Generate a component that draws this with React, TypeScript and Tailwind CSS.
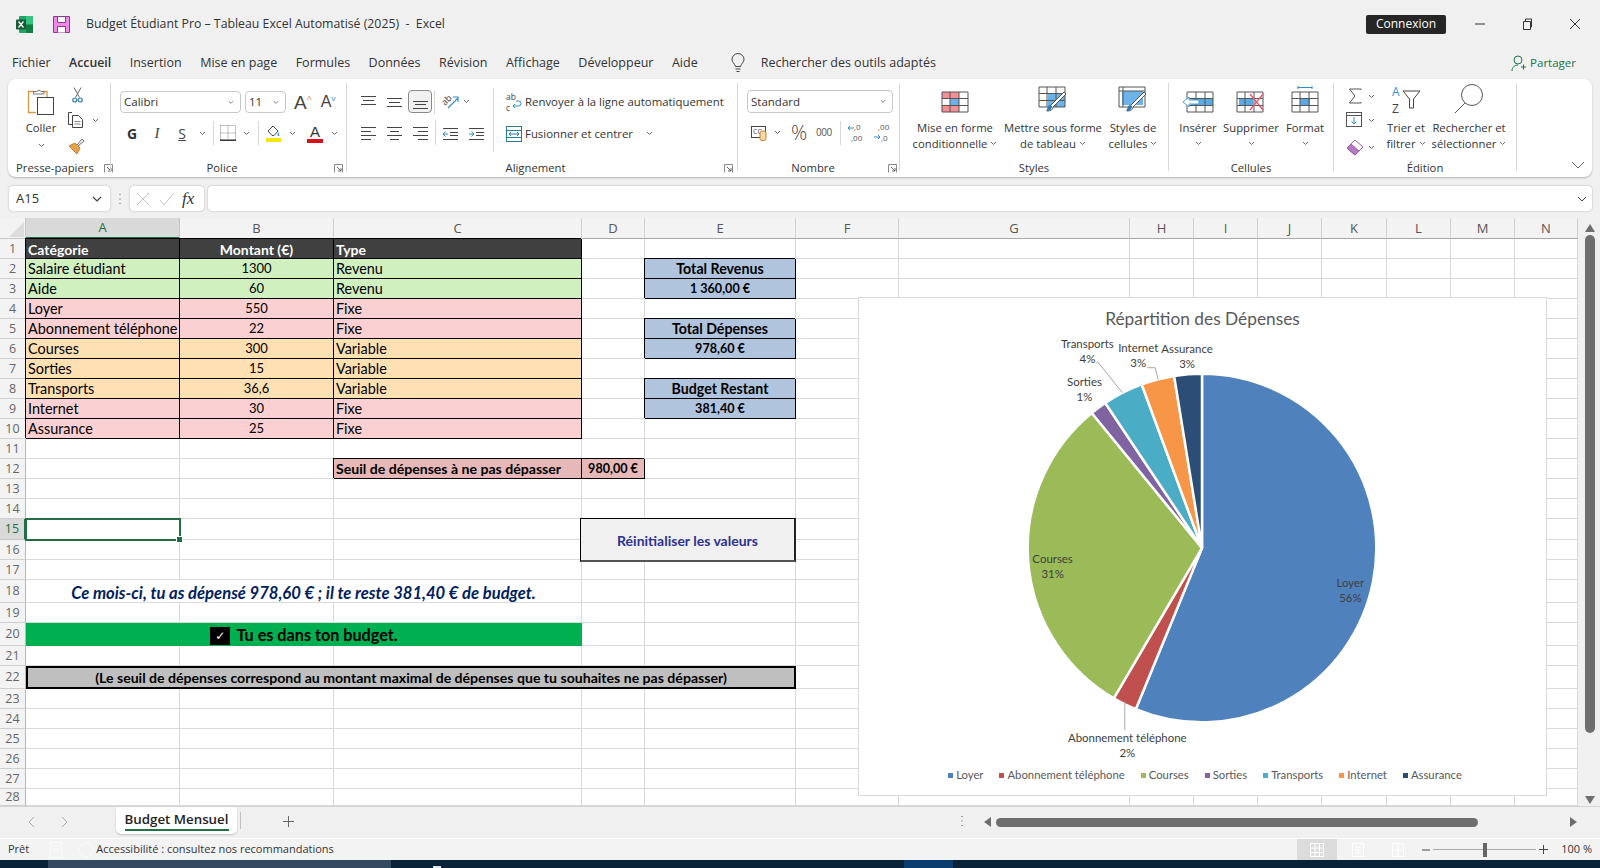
import React from "react";

const Chev = ({ s = 7 }: { s?: number }) => (
  <svg width={s} height={5} viewBox="0 0 7 5" className="shrink-0"><path d="M1 1l2.5 2.5L6 1" fill="none" stroke="#666" strokeWidth="1" /></svg>
);
const Launch = () => (
  <svg width="9" height="9" viewBox="0 0 9 9" className="shrink-0"><path d="M.5 8.5V.5h8v8" fill="none" stroke="#8a8a8a" /><path d="M3 3l4 4M7 4v3H4" fill="none" stroke="#666" /></svg>
);
const Sep = ({ cls }: { cls: string }) => <div className={`w-px bg-[#d6d6d6] shrink-0 ${cls}`} />;

function Group({ w, label, launch, pad, children }: { w: string; label: string; launch?: string; pad?: string; children: React.ReactNode }) {
  return (
    <>
      <div className={`flex flex-col h-full shrink-0 ${w}`}>
        <div className="flex-1 flex min-h-0">{children}</div>
        <div className={`h-[18px] flex items-center text-[11.300px] text-[#333] whitespace-nowrap ${pad ?? ""}`}>
          <span className="flex-1 text-center">{label}</span>
          {launch ? <span className={`flex ${launch}`}><Launch /></span> : null}
        </div>
      </div>
      <div className="w-px h-[88px] mt-[4px] bg-[#d8d8d8] shrink-0" />
    </>
  );
}

const Paste = () => (
  <svg width="28" height="29" viewBox="0 0 28 29">
    <path d="M7 4.500H1.500v21H9M15 4.500h5V10" fill="none" stroke="#d39a45" strokeWidth="1.300" />
    <path d="M6.500 7V4.500H10a2.500 2.500 0 0 1 4 0h3V7z" fill="#fff" stroke="#777" />
    <rect x="10.500" y="10.500" width="16" height="17" fill="#fff" stroke="#444" />
  </svg>
);
const Cut = () => (
  <svg width="11" height="16" viewBox="0 0 11 16">
    <path d="M2 .5l5.500 10M9 .5L3.500 10.500" stroke="#666" fill="none" />
    <circle cx="2.800" cy="13" r="2" fill="none" stroke="#2f79b5" strokeWidth="1.200" />
    <circle cx="8.200" cy="13" r="2" fill="none" stroke="#2f79b5" strokeWidth="1.200" />
  </svg>
);
const Copy = () => (
  <svg width="16" height="16" viewBox="0 0 16 16">
    <path d="M4 .5H.5v12H4" fill="none" stroke="#444" />
    <path d="M4.500 3.500h6l4 4v8h-10z" fill="#fff" stroke="#444" />
    <path d="M6.500 9.500h6M6.500 12h6" stroke="#888" />
  </svg>
);
const Brush = () => (
  <svg width="17" height="16" viewBox="0 0 17 16">
    <path d="M1 8l6-3 5 5-3 6z" fill="#e8a14f" stroke="#c97e2a" />
    <path d="M9 7l5-6 2 2-6 5" fill="#fff" stroke="#666" />
  </svg>
);
const Borders = () => (
  <svg width="16" height="16" viewBox="0 0 16 16">
    <path d="M.5 .5h15v15M.5 .5v15M8 .5v14M.5 8h15" fill="none" stroke="#888" strokeDasharray="1 1" />
    <path d="M0 15.200h16" stroke="#222" strokeWidth="1.400" />
  </svg>
);
const FillI = () => (
  <svg width="17" height="18" viewBox="0 0 17 18">
    <path d="M3 7l5-5 5 5-4 4.500H7z" fill="#fff" stroke="#444" />
    <path d="M13 8c1 2 2 3 1 4s-2-1-1-4z" fill="#3b8fd1" />
    <rect x="1" y="14" width="15" height="4" fill="#f5e612" />
  </svg>
);
const Line = ({ ys, xs }: { ys: number[]; xs: [number, number][] }) => (
  <svg width="15" height="16" viewBox="0 0 15 16">
    {ys.map((y, i) => <path key={i} d={`M${xs[i][0]} ${y}H${xs[i][1]}`} stroke="#444" />)}
  </svg>
);
const Orient = () => (
  <svg width="17" height="17" viewBox="0 0 17 17" className="overflow-visible">
    <text x="0" y="10" fontSize="9" fill="#444" transform="rotate(-45 5 8)">ab</text>
    <path d="M6 15L16 5M11 4h5v5" fill="none" stroke="#2f8fc4" strokeWidth="1.100" />
  </svg>
);
const IndentL = () => (
  <svg width="15" height="16" viewBox="0 0 15 16">
    <path d="M0 3.500h15M7 7.500h8M7 10.500h8M0 14.500h15" stroke="#444" fill="none" /><path d="M5 9H0M2.500 6.500L0 9l2.500 2.500" stroke="#2f8fc4" fill="none" />
  </svg>
);
const IndentR = () => (
  <svg width="15" height="16" viewBox="0 0 15 16">
    <path d="M0 3.500h15M7 7.500h8M7 10.500h8M0 14.500h15" stroke="#444" fill="none" /><path d="M0 9h5M2.500 6.500L5 9l-2.500 2.500" stroke="#2f8fc4" fill="none" />
  </svg>
);
const Wrap = () => (
  <svg width="16" height="18" viewBox="0 0 16 18" className="overflow-visible">
    <text x="0" y="7" fontSize="8.500" fill="#444">ab</text>
    <text x="0" y="18" fontSize="8.500" fill="#444">c</text>
    <path d="M7 13h5.500a2.500 2.500 0 0 0 0-5H10M7 13l2-2M7 13l2 2" fill="none" stroke="#2f8fc4" />
  </svg>
);
const Merge = () => (
  <svg width="16" height="16" viewBox="0 0 16 16">
    <rect x=".5" y=".5" width="15" height="15" fill="#fff" stroke="#2a7a9c" />
    <path d="M.5 4.500h15M.5 11.500h15" stroke="#2a7a9c" />
    <path d="M3 8h10M5 6L3 8l2 2M11 6l2 2-2 2" fill="none" stroke="#2a7a9c" />
  </svg>
);
const NumFmt = () => (
  <svg width="17" height="16" viewBox="0 0 17 16" className="overflow-visible">
    <rect x=".5" y="1.500" width="14" height="11" fill="#fff" stroke="#444" />
    <text x="2" y="9" fontSize="7" fill="#444">CC</text>
    <rect x="9" y="6" width="6" height="9.500" rx="2" fill="#f3d9a8" stroke="#c97e2a" />
  </svg>
);
const Dec = ({ inc }: { inc: boolean }) => (
  <svg width="17" height="19" viewBox="0 0 17 19" className="overflow-visible">
    <text x={inc ? 7 : 5} y="7" fontSize="8" fill="#555">{inc ? ",0" : ",00"}</text>
    <text x={inc ? 4 : 8} y="18" fontSize="8" fill="#555">{inc ? ",00" : ",0"}</text>
    {inc ? <path d="M7 5H1M3 3L1 5l2 2" fill="none" stroke="#2f8fc4" /> : <path d="M1 14h6M5 12l2 2-2 2" fill="none" stroke="#2f8fc4" />}
  </svg>
);
const GridLines = () => (
  <path d="M1 1h26v20H1zM1 7.500h26M1 14.500h26M9 1v20M18 1v20" fill="none" stroke="#555" />
);
const Cond = () => (
  <svg width="28" height="22" viewBox="0 0 28 22">
    <rect x="1" y="1" width="17" height="6.500" fill="#f58f95" />
    <rect x="1" y="14.500" width="17" height="6.500" fill="#f58f95" />
    <rect x="9" y="7.500" width="9" height="7" fill="#6db3e8" />
    <GridLines />
  </svg>
);
const TableS = () => (
  <svg width="31" height="27" viewBox="0 0 31 27">
    <rect x="10" y="7.500" width="17" height="13.500" fill="#6db3e8" />
    <GridLines />
    <path d="M28 8L15 21c0 3-3 4-6 4 2-2 1-5 4-6L26 6z" fill="#fff" stroke="#555" />
    <path d="M14 20c0 3-2 5-6 5 2-2 1-5 4-6z" fill="#2f79b5" />
  </svg>
);
const CellS = () => (
  <svg width="31" height="27" viewBox="0 0 31 27">
    <rect x="4" y="5" width="21" height="14" fill="#6db3e8" />
    <path d="M1 1h26v20H1zM1 5h26M5 1v20" fill="none" stroke="#555" />
    <path d="M28 8L15 21c0 3-3 4-6 4 2-2 1-5 4-6L26 6z" fill="#fff" stroke="#555" />
    <path d="M14 20c0 3-2 5-6 5 2-2 1-5 4-6z" fill="#2f79b5" />
  </svg>
);
const Insert = () => (
  <svg width="32" height="22" viewBox="0 0 32 22">
    <rect x="9" y="7.500" width="22" height="7" fill="#5aa9e0" />
    <path d="M5 1h26v20H5zM5 7.500h26M5 14.500h26M14 1v20M23 1v20" fill="none" stroke="#555" />
    <path d="M1 11l6-5v3h10v4H7v3z" fill="#fff" stroke="#4aa0d8" />
  </svg>
);
const Delete = () => (
  <svg width="30" height="22" viewBox="0 0 30 22">
    <rect x="3" y="7.500" width="14" height="7" fill="#5aa9e0" />
    <path d="M1 1h26v20H1zM1 7.500h26M1 14.500h26M9 1v20M18 1v20" fill="none" stroke="#555" />
    <path d="M14 3l13 16M27 3L14 19" stroke="#e8596a" strokeWidth="1.300" />
  </svg>
);
const FormatI = () => (
  <svg width="28" height="27" viewBox="0 0 28 27">
    <path d="M7 1.500h14M7 0v3M21 0v3" stroke="#2f8fc4" fill="none" />
    <g transform="translate(0 5)">
      <rect x="9" y="7.500" width="10" height="7" fill="#5aa9e0" />
      <GridLines />
    </g>
  </svg>
);
const Sigma = () => (
  <svg width="14" height="16" viewBox="0 0 14 16"><path d="M13 2V1H1.500l5.500 7-5.500 7H13v-1" fill="none" stroke="#555" /></svg>
);
const FillDown = () => (
  <svg width="17" height="16" viewBox="0 0 17 16">
    <rect x=".5" y=".5" width="15" height="14" fill="#fff" stroke="#555" />
    <path d="M.5 3.500h15" stroke="#555" />
    <path d="M8 5v7M5.500 9.500L8 12l2.500-2.500" fill="none" stroke="#2f8fc4" />
  </svg>
);
const Eraser = () => (
  <svg width="19" height="17" viewBox="0 0 19 17">
    <path d="M1 9l8-8 8 7-8 8z" fill="#fff" stroke="#9b59a8" />
    <path d="M1 9l4-4 8 7-4 4z" fill="#b779c2" stroke="#9b59a8" />
  </svg>
);
const Sort = () => (
  <svg width="29" height="27" viewBox="0 0 29 27" className="overflow-visible">
    <text x="0" y="10" fontSize="12" fill="#3b8fd1">A</text>
    <text x="0" y="27" fontSize="12" fill="#444">Z</text>
    <path d="M11 5h17l-6.500 8v9h-4v-9z" fill="#fff" stroke="#444" />
  </svg>
);
const Find = () => (
  <svg width="30" height="30" viewBox="0 0 30 30">
    <circle cx="18" cy="12" r="10.500" fill="#fff" stroke="#555" />
    <path d="M11 20L1 30" stroke="#555" />
  </svg>
);

function BigBtn({ w, icon, l1, l2 }: { w: string; icon: React.ReactNode; l1: string; l2?: string }) {
  return (
    <div className={`flex flex-col items-center shrink-0 pt-[7px] ${w}`}>
      <div className="h-[27px] flex items-end">{icon}</div>
      <div className="mt-[7px] text-[11.300px] leading-[15px] text-center whitespace-nowrap text-[#333]">{l1}</div>
      <div className="text-[11.300px] leading-[15px] h-[16px] flex items-center justify-center gap-[3px] whitespace-nowrap text-[#333]">
        {l2 ? <span>{l2}</span> : null}
        <Chev />
      </div>
    </div>
  );
}

const Ribbon = () => (
  <div className="mx-2 h-[98px] rounded-lg bg-white shadow-[0_1px_2px_rgba(0,0,0,0.25)] flex text-[#333]">
    <Group w="w-[102px]" label="Presse-papiers" launch="pl-[10px] pr-[3px]" pad="pl-[8px]">
      <div className="w-[50px] ml-[8px] pt-[8px] flex flex-col items-center shrink-0">
        <Paste />
        <div className="mt-[4px] text-[11.300px] leading-[16px]">Coller</div>
        <div className="mt-[7px]"><Chev /></div>
      </div>
      <div className="ml-[2px] pt-[8px] flex flex-col shrink-0">
        <div className="h-[16px] pl-[4px]"><Cut /></div>
        <div className="mt-[9px] h-[16px] flex items-center"><Copy /><span className="ml-[8px]"><Chev /></span></div>
        <div className="mt-[10px] h-[16px]"><Brush /></div>
      </div>
    </Group>
    <Group w="w-[235px]" label="Police" launch="pr-[3px] pl-[1px]">
      <div className="pl-[9px] pt-[12px] shrink-0">
        <div className="flex items-center h-[22px]">
          <div className="w-[121px] h-[22px] border border-[#c8c8c8] rounded-[4px] flex items-center justify-between pl-[3px] pr-[6px] text-[11.500px]"><span>Calibri</span><Chev s={6} /></div>
          <div className="ml-[4px] w-[41px] h-[22px] border border-[#c8c8c8] rounded-[4px] flex items-center justify-between pl-[3px] pr-[6px] text-[11.500px]"><span>11</span><Chev s={6} /></div>
          <span className="ml-[8px] text-[19px] leading-none text-[#444] font-['Liberation_Sans',sans-serif]">A</span>
          <span className="text-[9px] leading-none self-start mt-[3px] text-[#c97e2a]">^</span>
          <span className="ml-[9px] text-[16px] leading-none text-[#444] font-['Liberation_Sans',sans-serif]">A</span>
          <span className="text-[8px] leading-none self-start mt-[3px] text-[#2f8fc4]">v</span>
        </div>
        <div className="mt-[9px] h-[22px] flex items-center">
          <div className="w-[24px] text-center text-[14px] font-bold text-[#333]">G</div>
          <div className="w-[26px] text-center text-[15px] italic font-['Liberation_Serif',serif] text-[#444]">I</div>
          <div className="w-[24px] text-center text-[14px] underline text-[#444]">S</div>
          <div className="w-[16px] flex justify-center"><Chev /></div>
          <Sep cls="ml-[3px] h-[24px]" />
          <div className="ml-[6px]"><Borders /></div>
          <div className="w-[20px] flex justify-center"><Chev /></div>
          <Sep cls="ml-[2px] h-[24px]" />
          <div className="ml-[6px]"><FillI /></div>
          <div className="w-[20px] flex justify-center"><Chev /></div>
          <div className="ml-[5px] w-[16px] flex flex-col items-center">
            <span className="text-[15px] leading-[15px] font-['Liberation_Sans',sans-serif] text-[#333]">A</span>
            <span className="w-[16px] h-[4px] bg-[#d8101c]" />
          </div>
          <div className="w-[22px] flex justify-center"><Chev /></div>
        </div>
      </div>
    </Group>
    <Group w="w-[390px]" label="Alignement" launch="pr-[4px]" pad="pr-[0px]">
      <div className="pl-[14px] pt-[11px] w-[146px] shrink-0">
        <div className="flex items-center h-[23px]">
          <Line ys={[2.5, 6.5, 10.5]} xs={[[0, 15], [2, 13], [0, 15]]} />
          <div className="ml-[11px]"><Line ys={[4.5, 8.5, 12.5]} xs={[[0, 15], [2, 13], [0, 15]]} /></div>
          <div className="ml-[6px] w-[24px] h-[23px] border border-[#8a8a8a] rounded-[4px] bg-[#f1f1f1] flex items-center justify-center"><Line ys={[7.5, 10.5, 14.5]} xs={[[0, 15], [2, 13], [0, 15]]} /></div>
          <Sep cls="ml-[2px] h-[24px]" />
          <div className="ml-[7px]"><Orient /></div>
          <div className="ml-[4px]"><Chev /></div>
        </div>
        <div className="mt-[8px] flex items-center h-[23px]">
          <Line ys={[2.5, 6.5, 10.5, 14.5]} xs={[[0, 15], [0, 10], [0, 15], [0, 10]]} />
          <div className="ml-[11px]"><Line ys={[2.5, 6.5, 10.5, 14.5]} xs={[[0, 15], [3, 12], [0, 15], [3, 12]]} /></div>
          <div className="ml-[11px]"><Line ys={[2.5, 6.5, 10.5, 14.5]} xs={[[0, 15], [5, 15], [0, 15], [5, 15]]} /></div>
          <Sep cls="ml-[7px] h-[24px]" />
          <div className="ml-[7px]"><IndentL /></div>
          <div className="ml-[11px]"><IndentR /></div>
        </div>
      </div>
      <Sep cls="mt-[9px] h-[64px]" />
      <div className="pl-[12px] pt-[11px]">
        <div className="flex items-center h-[23px] text-[11.400px]"><Wrap /><span className="ml-[3px] whitespace-nowrap">Renvoyer à la ligne automatiquement</span></div>
        <div className="mt-[9px] flex items-center h-[23px] text-[11.400px]"><Merge /><span className="ml-[3px] whitespace-nowrap">Fusionner et centrer</span><span className="ml-[13px]"><Chev /></span></div>
      </div>
    </Group>
    <Group w="w-[161px]" label="Nombre" launch="pr-[2px]">
      <div className="pl-[9px] pt-[11px]">
        <div className="w-[146px] h-[23px] border border-[#c8c8c8] rounded-[4px] flex items-center justify-between pl-[3px] pr-[6px] text-[11.500px]"><span>Standard</span><Chev s={6} /></div>
        <div className="mt-[8px] h-[23px] flex items-center pl-[4px]">
          <NumFmt />
          <div className="w-[18px] flex justify-center"><Chev /></div>
          <span className="ml-[5px] w-[18px] text-[20px] leading-none font-light text-[#444]">%</span>
          <span className="ml-[7px] w-[18px] text-[10px] text-[#555] tracking-[-0.5px]">000</span>
          <Sep cls="ml-[6px] h-[24px]" />
          <div className="ml-[6px]"><Dec inc /></div>
          <div className="ml-[9px]"><Dec inc={false} /></div>
        </div>
      </div>
    </Group>
    <Group w="w-[268px]" label="Styles">
      <div className="w-[5px] shrink-0" />
      <BigBtn w="w-[100px]" icon={<Cond />} l1="Mise en forme" l2="conditionnelle" />
      <BigBtn w="w-[96px]" icon={<TableS />} l1="Mettre sous forme" l2="de tableau" />
      <BigBtn w="w-[64px]" icon={<CellS />} l1="Styles de" l2="cellules" />
    </Group>
    <Group w="w-[164px]" label="Cellules">
      <div className="w-[1px] shrink-0" />
      <BigBtn w="w-[56px]" icon={<Insert />} l1="Insérer" />
      <BigBtn w="w-[50px]" icon={<Delete />} l1="Supprimer" />
      <BigBtn w="w-[58px]" icon={<FormatI />} l1="Format" />
    </Group>
    <Group w="w-[182px]" label="Édition">
      <div className="pl-[12px] pt-[8px] w-[42px] shrink-0 flex flex-col">
        <div className="h-[18px] flex items-center"><span className="ml-[2px]"><Sigma /></span><span className="ml-[6px]"><Chev /></span></div>
        <div className="mt-[6px] h-[18px] flex items-center"><FillDown /><span className="ml-[5px]"><Chev /></span></div>
        <div className="mt-[9px] h-[18px] flex items-center"><Eraser /><span className="ml-[3px]"><Chev /></span></div>
      </div>
      <BigBtn w="w-[60px]" icon={<Sort />} l1="Trier et" l2="filtrer" />
      <BigBtn w="w-[66px]" icon={<Find />} l1="Rechercher et" l2="sélectionner" />
    </Group>
    <div className="flex-1 flex items-end justify-end pr-[7px] pb-[8px]">
      <svg width="14" height="8" viewBox="0 0 14 8"><path d="M1 1l6 6 6-6" fill="none" stroke="#666" /></svg>
    </div>
  </div>
);

type Cell = { t?: React.ReactNode; c?: string; span?: 1 | 2 | 3 | 5 };
const gl = "border-r border-b border-[#dadada]";
const blk = "relative z-10 border-r border-b border-black shadow-[-1px_-1px_0_0_#000] flex items-center px-[2px] pt-[1px] whitespace-nowrap text-black";
const hd = `${blk} bg-[#404040] text-white font-bold text-[14px]`;
const gr = `${blk} bg-[#d0f0c0]`;
const pk = `${blk} bg-[#fad0d2]`;
const or = `${blk} bg-[#fee0b3]`;
const bl = `${blk} bg-[#b0c4de] font-bold justify-center text-[14.200px]`;
const blN = `${blk} bg-[#b0c4de] font-bold justify-center text-[12.600px]`;
const num = " justify-center text-[13px]";
const empty: Cell = {};
const dataRow = (cl: string, a: string, b: string, c: string): Cell[] => [
  { t: a, c: cl },
  { t: b, c: cl + num },
  { t: c, c: cl },
];
const rows: Cell[][] = [
  [{ t: "Catégorie", c: hd }, { t: "Montant (€)", c: hd + " justify-center" }, { t: "Type", c: hd }],
  [...dataRow(gr, "Salaire étudiant", "1300", "Revenu"), empty, { t: "Total Revenus", c: bl }],
  [...dataRow(gr, "Aide", "60", "Revenu"), empty, { t: "1 360,00 €", c: blN }],
  dataRow(pk, "Loyer", "550", "Fixe"),
  [...dataRow(pk, "Abonnement téléphone", "22", "Fixe"), empty, { t: "Total Dépenses", c: bl }],
  [...dataRow(or, "Courses", "300", "Variable"), empty, { t: "978,60 €", c: blN }],
  dataRow(or, "Sorties", "15", "Variable"),
  [...dataRow(or, "Transports", "36,6", "Variable"), empty, { t: "Budget Restant", c: bl }],
  [...dataRow(pk, "Internet", "30", "Fixe"), empty, { t: "381,40 €", c: blN }],
  dataRow(pk, "Assurance", "25", "Fixe"),
  [],
  [empty, empty, { t: "Seuil de dépenses à ne pas dépasser", c: `${blk} bg-[#e6b8b7] font-bold text-[14.100px]` }, { t: "980,00 €", c: `${blk} bg-[#e6b8b7] font-bold justify-center text-[12.600px]` }],
  [],
  [],
  [{ c: `${gl} relative z-20 outline-2 outline-[#1f6e46] -outline-offset-1` }],
  [],
  [],
  [{ span: 3, t: "Ce mois-ci, tu as dépensé 978,60 € ; il te reste 381,40 € de budget.", c: `${gl} flex items-center justify-center pt-[4px] font-bold italic text-[#002060] text-[16.600px]` }],
  [],
  [{ span: 3, t: (<><span className="w-[20px] h-[18px] bg-black text-white flex items-center justify-center text-[12px] mr-[6px] font-['DejaVu_Sans',sans-serif] font-normal">✓</span><span>Tu es dans ton budget.</span></>), c: "bg-[#00b050] flex items-center justify-center pt-[2px] font-bold text-[16.200px] text-black" }],
  [],
  [{ span: 5, t: "(Le seuil de dépenses correspond au montant maximal de dépenses que tu souhaites ne pas dépasser)", c: "relative z-10 bg-[#bfbfbf] border-2 border-black flex items-center justify-center font-bold text-[14.100px] text-black whitespace-nowrap" }],
  [], [], [], [], [], [],
];
const cols = ["A", "B", "C", "D", "E", "F", "G", "H", "I", "J", "K", "L", "M", "N"];
const spanCls: Record<number, string> = { 1: "", 2: "col-span-2", 3: "col-span-3", 5: "col-span-5" };

function Sheet() {
  return (
    <div className="relative grid grid-cols-[26px_154px_154px_248px_63px_151px_103px_231px_64px_64px_64px_65px_64px_64px_63px] grid-rows-[21px_repeat(14,20px)_21px_20px_20px_23px_20px_23px_20px_23px_repeat(5,20px)_17px] h-[588px] w-[1578px] shrink-0 overflow-hidden bg-white font-['Lato',sans-serif] text-[14.400px] text-black">
      <div className="bg-[#f3f3f3] border-r border-b border-[#c6c6c6] flex items-end justify-end">
        <svg width="20" height="18" viewBox="0 0 20 18"><path d="M19 2v15H4z" fill="#dcdcdc" /></svg>
      </div>
      {cols.map((c) => (
        <div key={c} className={c === "A"
          ? "bg-[#d9d9d9] border-b-2 border-b-[#1f6e46] border-r border-r-[#c6c6c6] flex items-center justify-center pt-[1px] text-[13px] text-[#1f6e46] font-['Open_Sans',sans-serif]"
          : "bg-[#f3f3f3] border-b border-b-[#a8a8a8] border-r border-r-[#d0d0d0] flex items-center justify-center pt-[1px] text-[13px] text-[#555] font-['Open_Sans',sans-serif]"}>{c}</div>
      ))}
      {rows.map((r, i) => {
        const used = r.reduce((n, c) => n + (c.span ?? 1), 0);
        const fill: Cell[] = Array.from({ length: 14 - used }, () => ({}));
        return (
          <React.Fragment key={i}>
            <div className={i === 14
              ? "bg-[#d9d9d9] border-r-2 border-r-[#1f6e46] border-b border-b-[#c6c6c6] flex items-center justify-center pt-[1px] text-[12.500px] text-[#1f6e46] font-['Open_Sans',sans-serif]"
              : "bg-[#f3f3f3] border-r border-r-[#b8b8b8] border-b border-b-[#d0d0d0] flex items-center justify-center pt-[1px] text-[12.500px] text-[#666] font-['Open_Sans',sans-serif]"}>{i + 1}</div>
            {[...r, ...fill].map((c, j) => (
              <div key={j} className={`${spanCls[c.span ?? 1]} ${c.c ?? gl}`}>
                {c.t}
                {i === 14 && j === 0 ? <span className="absolute right-[-4px] bottom-[-4px] w-[7px] h-[7px] bg-[#1f6e46] border border-white" /> : null}
              </div>
            ))}
          </React.Fragment>
        );
      })}
      <div className="absolute left-[580px] top-[300px] w-[216px] h-[44px] z-20 bg-[#f0f0f0] border-t border-l border-t-black border-l-black border-r-2 border-b-2 border-r-[#222] border-b-[#555] flex items-center justify-center pt-[1px] font-bold text-[14px] text-[#2e3192]">Réinitialiser les valeurs</div>
      <Chart />
    </div>
  );
}

const slices = [
  { n: "Loyer", v: 550, col: "#4f81bd" },
  { n: "Abonnement téléphone", v: 22, col: "#c0504d" },
  { n: "Courses", v: 300, col: "#9bbb59" },
  { n: "Sorties", v: 15, col: "#8064a2" },
  { n: "Transports", v: 36.6, col: "#4bacc6" },
  { n: "Internet", v: 30, col: "#f79646" },
  { n: "Assurance", v: 25, col: "#2c4d75" },
];
function pie() {
  const total = slices.reduce((s, x) => s + x.v, 0);
  const cx = 1202, cy = 548, r = 175;
  let a = 0;
  return slices.map((s) => {
    const b = a + (s.v / total) * Math.PI * 2;
    const p = (t: number) => `${(cx + r * Math.sin(t)).toFixed(2)} ${(cy - r * Math.cos(t)).toFixed(2)}`;
    const d = `M${cx} ${cy}L${p(a)}A${r} ${r} 0 ${b - a > Math.PI ? 1 : 0} 1 ${p(b)}Z`;
    a = b;
    return <path key={s.n} d={d} fill={s.col} stroke="#fff" strokeWidth="2.500" />;
  });
}
const lbl = (x: number, y: number, a: string, b: string) => (
  <text textAnchor="middle" fontSize="11.500" fill="#404040" key={a}>
    <tspan x={x} y={y}>{a}</tspan>
    <tspan x={x} y={y + 15}>{b}</tspan>
  </text>
);
function Chart() {
  return (
    <div className="absolute left-[858px] top-[79px] w-[689px] h-[499px] z-20 bg-white border border-[#d9d9d9] flex flex-col items-center">
      <svg viewBox="858 297 689 499" className="absolute inset-0 w-full h-full font-['Lato',sans-serif]">
        {pie()}
        <path d="M1096 362h2l24 30M1147 367h8l3 12M1124.500 702v29" fill="none" stroke="#a6a6a6" />
        {lbl(1087, 347, "Transports", "4%")}
        {lbl(1138, 351, "Internet", "3%")}
        {lbl(1187, 352, "Assurance", "3%")}
        {lbl(1084, 385, "Sorties", "1%")}
        {lbl(1052, 563, "Courses", "31%")}
        {lbl(1351, 587, "Loyer", "56%")}
        {lbl(1127, 743, "Abonnement téléphone", "2%")}
      </svg>
      <div className="relative mt-[8px] text-[17.300px] leading-[26px] text-[#595959]">Répartition des Dépenses</div>
      <div className="relative mt-auto mb-[12px] ml-[5px] flex gap-[16px] text-[11.300px] leading-[16px] text-[#595959]">
        {slices.map((s) => (
          <span key={s.n} className="flex items-center gap-[3px]">
            <svg width="5" height="5" viewBox="0 0 5 5"><rect width="5" height="5" fill={s.col} /></svg>
            {s.n}
          </span>
        ))}
      </div>
    </div>
  );
}

export default function App() {
  return (
    <div className="w-[1600px] h-[868px] overflow-hidden bg-[#f0f0f0] flex flex-col font-['Open_Sans',sans-serif] text-[#333]">
      <div className="h-[44px] pt-[4px] flex items-center shrink-0">
        <svg className="ml-[16px]" width="17" height="17" viewBox="0 0 17 17">
          <rect x="3" y="0" width="14" height="17" rx="1" fill="#21a366" />
          <rect x="10" y="0" width="7" height="8.500" fill="#33c481" />
          <rect x="10" y="8.500" width="7" height="8.500" fill="#107c41" />
          <rect x="0" y="3.500" width="10" height="10" rx="1" fill="#185c37" />
          <path d="M2.500 5.500l5 6M7.500 5.500l-5 6" stroke="#fff" strokeWidth="1.300" />
        </svg>
        <svg className="ml-[20px]" width="17" height="17" viewBox="0 0 17 17">
          <path d="M.5 .5h16v16H.5z" fill="#f08ae8" stroke="#8a3a8e" />
          <path d="M4.500 .5h8v6h-8zM4.500 16.500v-6h8v6" fill="#fff" stroke="#8a3a8e" />
        </svg>
        <span className="ml-[16px] text-[12.300px] whitespace-pre">Budget Étudiant Pro – Tableau Excel Automatisé (2025)  -  Excel</span>
        <div className="ml-auto w-[80px] h-[19px] bg-[#262626] text-white text-[12px] rounded-[2px] flex items-center justify-center">Connexion</div>
        <svg className="ml-[28px]" width="12" height="12" viewBox="0 0 12 12"><path d="M1 6h10" stroke="#333" /></svg>
        <svg className="ml-[35px]" width="12" height="12" viewBox="0 0 12 12"><path d="M2.500 3.500h7v8h-7zM4.500 3.500V1h6v8h-1" fill="none" stroke="#333" /></svg>
        <svg className="ml-[36px] mr-[19px]" width="12" height="12" viewBox="0 0 12 12"><path d="M1 1l10 10M11 1L1 11" stroke="#333" /></svg>
      </div>
      <div className="h-[35px] pt-[3px] flex items-center shrink-0 pl-[12px] text-[12.500px] gap-[18.500px] whitespace-nowrap">
        <span>Fichier</span>
        <span className="font-semibold text-[12.300px]">Accueil</span>
        <span>Insertion</span>
        <span>Mise en page</span>
        <span>Formules</span>
        <span>Données</span>
        <span>Révision</span>
        <span>Affichage</span>
        <span>Développeur</span>
        <span>Aide</span>
        <svg className="ml-[15px]" width="14" height="20" viewBox="0 0 14 20"><path d="M4.500 13.500C3.500 10 1 9.500 1 6.500a6 6 0 0 1 12 0c0 3-2.500 3.500-3.500 7zM4.500 16h5M5.500 18.500h3" fill="none" stroke="#444" /></svg>
        <span className="ml-[-3px]">Rechercher des outils adaptés</span>
        <div className="ml-auto mr-[24px] flex items-center gap-[4px] text-[11.500px] text-[#217346]">
          <svg width="15" height="17" viewBox="0 0 15 17"><circle cx="7" cy="5" r="4" fill="none" stroke="#217346" /><path d="M1 16c0-4 3-6 6-6M10 12h5M12.500 9.500v5" fill="none" stroke="#217346" /></svg>
          Partager
        </div>
      </div>
      <Ribbon />
      <div className="mt-[9px] h-[25px] mx-[9px] flex items-stretch shrink-0 mr-2">
        <div className="w-[101px] bg-white rounded-[4px] shadow-[0_0_2px_rgba(0,0,0,0.3)] flex items-center justify-between pl-[7px] pr-[8px] text-[13px]">
          <span>A15</span>
          <svg width="10" height="6" viewBox="0 0 10 6"><path d="M1 1l4 4 4-4" fill="none" stroke="#444" strokeWidth="1.200" /></svg>
        </div>
        <div className="w-[20px] flex items-center justify-center">
          <svg width="2" height="12" viewBox="0 0 2 12"><path d="M1 1v1M1 5.500v1M1 10v1" stroke="#888" strokeWidth="1.500" /></svg>
        </div>
        <div className="w-[74px] bg-white rounded-[4px] shadow-[0_0_2px_rgba(0,0,0,0.3)] flex items-center pl-[6px]">
          <svg width="14" height="14" viewBox="0 0 14 14"><path d="M1 1l12 12M13 1L1 13" stroke="#c4c4c4" /></svg>
          <svg className="ml-[9px]" width="16" height="14" viewBox="0 0 16 14"><path d="M1 8l4 5L15 1" fill="none" stroke="#c4c4c4" /></svg>
          <span className="ml-[7px] italic font-['Liberation_Serif',serif] text-[17px] text-[#333]">fx</span>
        </div>
        <div className="ml-[4px] flex-1 bg-white rounded-[4px] shadow-[0_0_2px_rgba(0,0,0,0.3)] flex items-center justify-end pr-[5px]">
          <svg width="10" height="6" viewBox="0 0 10 6"><path d="M1 1l4 4 4-4" fill="none" stroke="#444" /></svg>
        </div>
      </div>
      <div className="mt-[7px] h-[588px] flex shrink-0">
        <Sheet />
        <div className="flex-1 flex flex-col items-center pl-[2px] pb-[2px]">
          <svg className="mt-[6px]" width="10" height="8" viewBox="0 0 10 8"><path d="M5 0l5 8H0z" fill="#6e6e6e" /></svg>
          <div className="mt-[3px] w-[10px] h-[498px] rounded-full bg-[#6e6e6e]" />
          <svg className="mt-auto" width="10" height="8" viewBox="0 0 10 8"><path d="M5 8l5-8H0z" fill="#6e6e6e" /></svg>
        </div>
      </div>
      <div className="h-[32px] flex items-start shrink-0 border-t border-[#d4d4d4]">
        <svg className="ml-[28px] mt-[9px]" width="8" height="12" viewBox="0 0 8 12"><path d="M6 1L1 6l5 5" fill="none" stroke="#aaa" /></svg>
        <svg className="ml-[24px] mt-[9px]" width="8" height="12" viewBox="0 0 8 12"><path d="M2 1l5 5-5 5" fill="none" stroke="#aaa" /></svg>
        <div className="ml-[48px] w-[121px] h-[27px] bg-white rounded-b-[5px] shadow-[0_1px_2px_rgba(0,0,0,0.2)] flex flex-col items-center pt-[3px]">
          <span className="text-[13.300px] leading-[19px] font-semibold text-[#222] whitespace-nowrap">Budget Mensuel</span>
          <span className="w-[104px] h-[2px] bg-[#217346]" />
        </div>
        <div className="ml-[3px] mt-[5px] w-px h-[17px] bg-[#c0c0c0]" />
        <svg className="ml-[42px] mt-[9px]" width="11" height="11" viewBox="0 0 11 11"><path d="M5.500 0v11M0 5.500h11" stroke="#666" /></svg>
        <svg className="ml-[667px] mt-[8px]" width="2" height="12" viewBox="0 0 2 12"><path d="M1 1v1M1 5.500v1M1 10v1" stroke="#888" strokeWidth="1.500" /></svg>
        <svg className="ml-[21px] mt-[10px]" width="7" height="10" viewBox="0 0 7 10"><path d="M0 5l7-5v10z" fill="#6e6e6e" /></svg>
        <div className="ml-[5px] mt-[11px] w-[482px] h-[9px] rounded-full bg-[#6e6e6e]" />
        <svg className="ml-[92px] mt-[10px]" width="7" height="10" viewBox="0 0 7 10"><path d="M7 5L0 0v10z" fill="#6e6e6e" /></svg>
      </div>
      <div className="h-[22px] flex items-center shrink-0 bg-[#f3f3f3] border-t border-white text-[11px] text-[#333] whitespace-nowrap">
        <span className="ml-[8px]">Prêt</span>
        <svg className="ml-[21px]" width="12" height="16" viewBox="0 0 12 16"><path d="M.5 .5h11v15H.5zM3 4h6M3 7h6M3 10h6" fill="none" stroke="#fbfbfb" /></svg>
        <svg className="ml-[16px]" width="16" height="16" viewBox="0 0 16 16"><circle cx="8" cy="8" r="7" fill="none" stroke="#fbfbfb" /></svg>
        <span className="ml-[2px]">Accessibilité : consultez nos recommandations</span>
        <div className="ml-auto w-[40px] h-full bg-[#dcdcdc] flex items-center justify-center">
          <svg width="14" height="14" viewBox="0 0 14 14"><path d="M.5 .5h13v13H.5zM.5 5h13M.5 9.500h13M5 .5v13M9.500 .5v13" fill="none" stroke="#fff" /></svg>
        </div>
        <svg className="ml-[15px]" width="12" height="14" viewBox="0 0 12 14"><path d="M.5 .5h11v13H.5zM3 4h6M3 7h6M3 10h6" fill="none" stroke="#fff" /></svg>
        <svg className="ml-[28px]" width="12" height="14" viewBox="0 0 12 14"><path d="M.5 .5h11v13H.5zM.5 7h11M6 .5v13" fill="none" stroke="#fff" /></svg>
        <svg className="ml-[18px]" width="8" height="2" viewBox="0 0 8 2"><path d="M0 1h8" stroke="#444" /></svg>
        <div className="ml-[3px] w-[103px] h-px bg-[#aaa] flex items-center pl-[50px]"><span className="w-[4px] h-[14px] bg-[#666] shrink-0" /></div>
        <svg className="ml-[3px]" width="9" height="9" viewBox="0 0 9 9"><path d="M4.500 0v9M0 4.500h9" stroke="#444" /></svg>
        <span className="ml-[13px] mr-[8px]">100 %</span>
      </div>
      <div className="h-[8px] flex shrink-0 bg-[#0a2238] overflow-hidden">
        <div className="ml-[48px] w-[343px] bg-[#33495f]" />
        <div className="ml-[42px] w-[8px] h-[2px] mt-[6px] bg-[#dfe4e8]" />
        <div className="ml-[463px] w-[49px] bg-[#0a3c6e]" />
        <span className="ml-[536px] text-[10px] leading-[14px] pt-[5px] text-white">10:16</span>
      </div>
    </div>
  );
}
